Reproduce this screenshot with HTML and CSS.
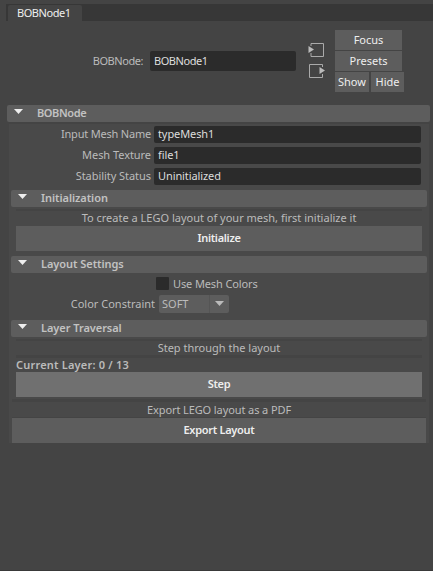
FILE: index.html
```html
<!DOCTYPE html>
<html lang="en">
<head>
<meta charset="utf-8">
<title>BOBNode1</title>
<link rel="stylesheet" href="styles.css">
</head>
<body>
<nav class="tabs"><div class="tab">BOBNode1</div></nav>
<header class="node">
  <label class="node-label">BOBNode:</label>
  <div class="field node-field">BOBNode1</div>
  <div class="connections">
    <svg width="18" height="16" viewBox="0 0 18 16"><path d="M4 4V1.500H16.500V14.500H4V11" fill="none" stroke="#aaa"/><path d="M1.500 4L7 7.500L1.500 11Z" fill="#bbb"/></svg>
    <svg width="18" height="16" viewBox="0 0 18 16"><path d="M15.500 4V1.500H2.500V14.500H15.500V11" fill="none" stroke="#aaa"/><path d="M12.500 4L18 7.500L12.500 11Z" fill="#bbb"/></svg>
  </div>
  <div class="actions">
    <div class="button wide">Focus</div>
    <div class="button wide">Presets</div>
    <div class="pair"><div class="button show">Show</div><div class="button hide">Hide</div></div>
  </div>
</header>
<main>
  <h1 class="bar"><i class="arrow"></i>BOBNode</h1>
  <div class="panel">
    <div class="attributes">
      <div class="row"><label class="tight">Input Mesh Name</label><div class="field">typeMesh1</div></div>
      <div class="row"><label>Mesh Texture</label><div class="field">file1</div></div>
      <div class="row"><label>Stability Status</label><div class="field">Uninitialized</div></div>
    </div>
    <section class="initialization">
      <h2 class="bar"><i class="arrow"></i>Initialization</h2>
      <p class="hint intro">To create a LEGO layout of your mesh, first initialize it</p>
      <div class="button action">Initialize</div>
    </section>
    <section class="settings">
      <h2 class="bar"><i class="arrow"></i>Layout Settings</h2>
      <div class="check"><span class="box"></span>Use Mesh Colors</div>
      <div class="choice"><label>Color Constraint</label><div class="select"><span>SOFT</span><b><i class="arrow small"></i></b></div></div>
    </section>
    <section class="traversal">
      <h2 class="bar"><i class="arrow"></i>Layer Traversal</h2>
      <p class="hint step-hint">Step through the layout</p>
      <p class="current">Current Layer: 0 / 13</p>
      <div class="button action step">Step</div>
    </section>
    <p class="hint export-hint">Export LEGO layout as a PDF</p>
    <div class="button action export">Export Layout</div>
  </div>
</main>
</body>
</html>
```

FILE: styles.css
```css
* { box-sizing: border-box; }
body {
  margin: 0;
  width: 433px;
  height: 571px;
  overflow: hidden;
  background: #444;
  color: #bbb;
  font: 11px/16px "Noto Sans", "Open Sans", sans-serif;
  white-space: nowrap;
  border-bottom: 1px solid #393939;
}
p, h1, h2 { margin: 0; font-size: 11px; }
.tabs {
  margin: 4px 0 0 6px;
  height: 17px;
  padding: 1px 0 0 2px;
  background: #373737;
}
.tab {
  width: 74px;
  height: 16px;
  padding-left: 9px;
  border-radius: 2px 2px 0 0;
  background: #444;
  color: #eee;
  letter-spacing: -0.45px;
}
.node {
  display: flex;
  align-items: flex-start;
  height: 84px;
  padding-top: 9px;
}
.node-label { width: 143px; margin: 23px 7px 0 0; text-align: right; letter-spacing: -0.45px; }
.field {
  height: 17px;
  padding-left: 4px;
  border-radius: 2px;
  background: #2b2b2b;
  color: #ddd;
  line-height: 16px;
  letter-spacing: -0.1px;
}
.node-field { width: 146px; height: 20px; margin-top: 21px; line-height: 20px; letter-spacing: -0.45px; }
.connections {
  display: flex;
  flex-direction: column;
  gap: 5px;
  width: 18px;
  margin: 12px 10px 0 11px;
}
.connections svg { display: block; }
.actions { display: flex; flex-direction: column; gap: 1px; }
.button {
  height: 20px;
  background: #5d5d5d;
  color: #eee;
  line-height: 20px;
  text-align: center;
}
.wide { width: 67px; }
.pair { display: flex; gap: 2px; }
.show { width: 34px; }
.hide { width: 33px; }
main { margin: 0 3px 0 7px; }
.bar {
  display: flex;
  align-items: center;
  height: 17px;
  padding-bottom: 1px;
  border-radius: 2px;
  background: #5d5d5d;
  color: #c2c2c2;
  font-weight: 600;
  letter-spacing: -0.05px;
}
h1.bar { letter-spacing: -0.4px; }
.arrow {
  width: 9px;
  height: 5px;
  margin: -3px 14px 0 7px;
  background: #eee;
  clip-path: polygon(0 0, 100% 0, 50% 100%);
}
.panel { height: 319px; margin: 2px 1px 0 2px; padding: 2px 2px 0; background: #494949; }
.attributes { display: grid; gap: 4px; }
.row { display: grid; grid-template-columns: 140px 267px; column-gap: 3px; }
.row label { text-align: right; letter-spacing: -0.05px; }
.row .tight { letter-spacing: -0.2px; }
section { width: 416px; }
.initialization { height: 66px; margin-top: 5px; }
.settings { height: 64px; }
.traversal { height: 79px; }
.hint { text-align: center; border: 0 solid #444; }
.intro { height: 17px; margin: 2px 5px 0; border-top-width: 2px; line-height: 14px; }
.action { height: 25px; line-height: 24px; font-weight: 600; letter-spacing: -0.3px; }
.initialization .action, .step { margin: 0 5px; }
.check { display: flex; align-items: center; height: 13px; margin: 4px 0 5px 145px; letter-spacing: -0.12px; }
.box { width: 13px; height: 13px; margin-right: 4px; border-radius: 1px; background: #2b2b2b; }
.choice { display: flex; height: 18px; }
.choice label { width: 144px; margin-right: 4px; text-align: right; line-height: 18px; }
.select { display: flex; width: 70px; border-radius: 2px; background: #5d5d5d; line-height: 18px; }
.select span { width: 51px; padding-left: 3px; border-right: 1px solid #555; }
.small { display: block; width: 9px; height: 5px; margin: 6px 0 0 5px; background: #bbb; }
.step-hint { height: 19px; margin: 2px 5px 0; border-width: 2px 0 3px; line-height: 14px; }
.current { height: 14px; padding-left: 5px; font-weight: 600; line-height: 13px; letter-spacing: 0.2px; }
.step { background: #707070; }
.export-hint { width: 414px; height: 19px; margin-left: 1px; border-width: 3px 0 1px; line-height: 15px; letter-spacing: -0.1px; }
.export { width: 414px; margin-left: 1px; }
```
